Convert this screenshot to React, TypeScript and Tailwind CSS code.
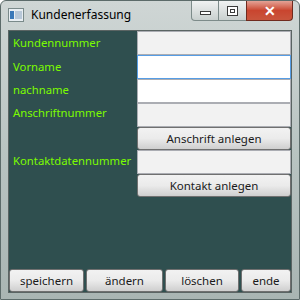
const font = "font-['Segoe_UI','Noto_Sans','Open_Sans',sans-serif]";

const Field = ({ white }: { white?: boolean }) => (
  <div
    className={`h-[24px] border border-[#abadb3] ${white ? "bg-white" : "bg-[#f2f2f2]"}`}
  />
);

const Btn = ({ label, className = "" }: { label: string; className?: string }) => (
  <div
    className={`flex h-[23px] items-center justify-center rounded-[3px] border border-[#707070] bg-gradient-to-b from-[#f2f2f2] via-[#ebebeb] to-[#cfcfcf] text-[11.5px] text-[#1a1a1a] ${className}`}
  >
    {label}
  </div>
);

const Label = ({ text, h }: { text: string; h: string }) => (
  <div className={`flex items-center whitespace-nowrap pl-[4px] text-[11.3px] text-[#7cfc00] ${h}`}>
    {text}
  </div>
);

export default function App() {
  return (
    <div
      className={`flex h-[300px] w-[300px] flex-col overflow-hidden rounded-t-[6px] border border-[#5c6b6a] bg-gradient-to-b from-[#cfd6d5] via-[#b9c4c2] to-[#a9b5b3] ${font}`}
    >
      {/* title bar */}
      <div className="flex h-[28px] items-start">
        <div className="flex h-[22px] items-center gap-[7px] pl-[7px] pt-[6px]">
          <div className="flex h-[14px] w-[16px] border border-[#7a8a8a] bg-[#e8eef2]">
            <div className="mt-[2px] ml-[1px] h-[8px] w-[4px] bg-[#3a78b8]" />
            <div className="mt-[2px] ml-[1px] h-[8px] w-[7px] bg-[#b8c8d8]" />
          </div>
          <span className="text-[12px] text-black">Kundenerfassung</span>
        </div>
        <div className="ml-auto mr-[6px] flex h-[20px]">
          <div className="flex w-[28px] items-center justify-center rounded-bl-[4px] border border-t-0 border-[#7d8b8a] bg-gradient-to-b from-[#f0f2f2] to-[#c9d0cf]">
            <div className="mt-[4px] h-[4px] w-[11px] border border-[#3b3b3b] bg-white" />
          </div>
          <div className="flex w-[27px] items-center justify-center border-b border-[#7d8b8a] bg-gradient-to-b from-[#f0f2f2] to-[#c9d0cf]">
            <div className="flex h-[10px] w-[11px] items-center justify-center border border-[#3b3b3b] bg-white">
              <div className="h-[4px] w-[5px] border border-[#3b3b3b]" />
            </div>
          </div>
          <div className="flex w-[47px] items-center justify-center rounded-br-[4px] border border-t-0 border-[#6f2a1e] bg-gradient-to-b from-[#e3a296] via-[#c9452f] to-[#c9553d] text-[14px] font-bold text-white">
            ✕
          </div>
        </div>
      </div>

      {/* client */}
      <div className="mx-[7px] mt-[1px] mb-[6px] flex flex-1 flex-col border border-[#5a6463] bg-[#2f4f4f]">
        <div className="grid grid-cols-[128px_1fr]">
          <div className="flex flex-col">
            <Label text="Kundennummer" h="h-[24px]" />
            <Label text="Vorname" h="h-[24px]" />
            <Label text="nachname" h="h-[23px]" />
            <Label text="Anschriftnummer" h="h-[23px]" />
            <div className="h-[24px]" />
            <Label text="Kontaktdatennummer" h="h-[24px]" />
          </div>
          <div className="flex flex-col">
            <Field />
            <div className="h-[24px] border border-[#569de5] bg-white" />
            <Field white />
            <Field />
            <Btn label="Anschrift anlegen" />
            <Field />
            <Btn label="Kontakt anlegen" />
          </div>
        </div>
        <div className="mt-auto flex gap-[2px]">
          <Btn label="speichern" className="w-[75px]" />
          <Btn label="ändern" className="w-[77px]" />
          <Btn label="löschen" className="w-[74px]" />
          <Btn label="ende" className="flex-1" />
        </div>
      </div>
    </div>
  );
}
